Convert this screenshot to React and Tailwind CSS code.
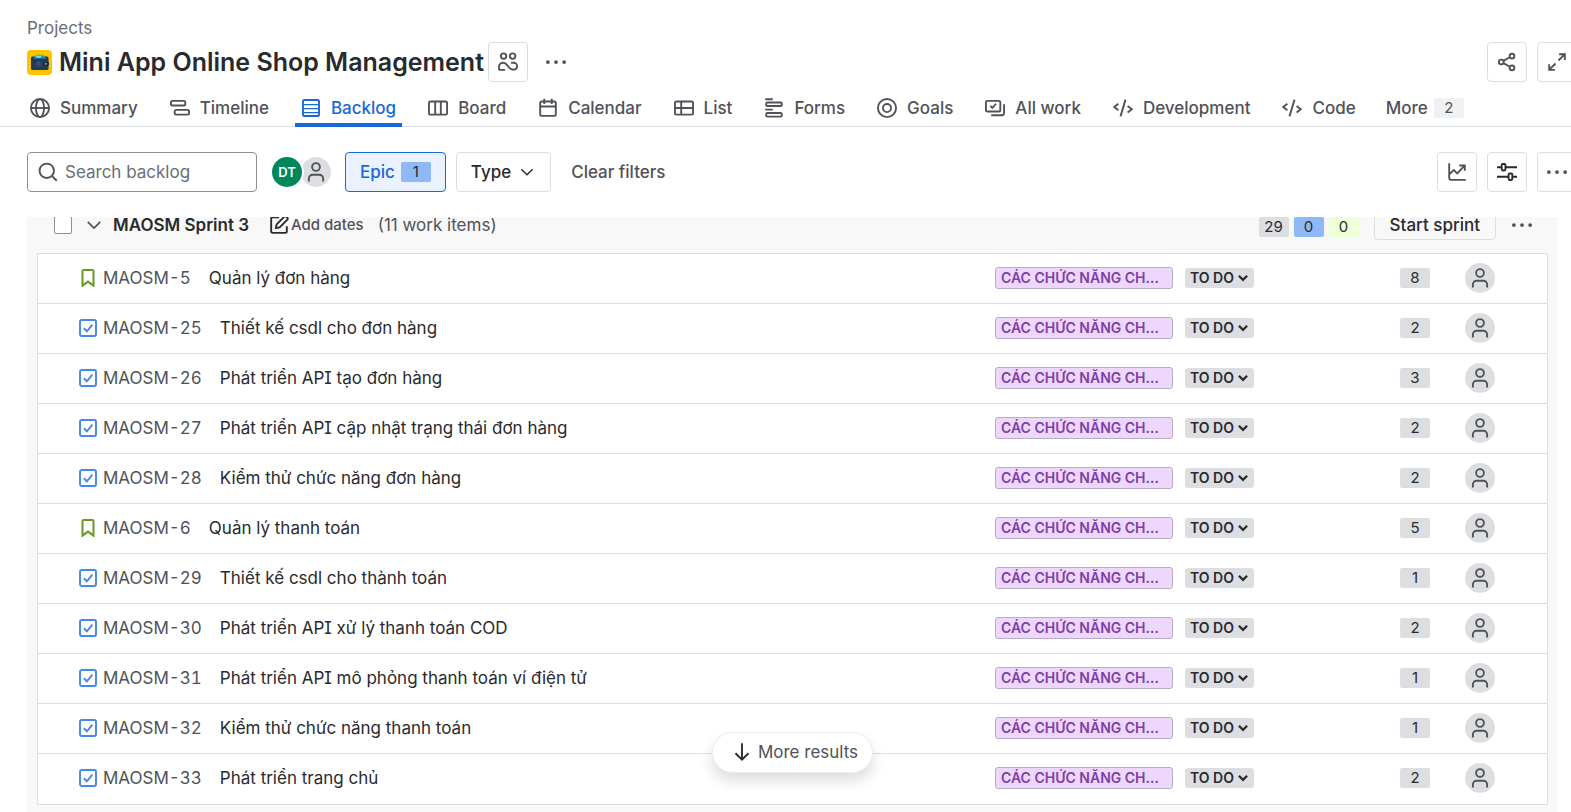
import React from "react";

function Icon({ size = 20, children, className = "", label }) {
  return (
    <svg
      width={size}
      height={size}
      viewBox="0 0 16 16"
      fill="none"
      stroke="currentColor"
      strokeWidth="1.5"
      className={"shrink-0 " + className}
      role={label ? "img" : undefined}
      aria-label={label}
      aria-hidden={label ? undefined : true}
    >
      {children}
    </svg>
  );
}

const icons = {
  globe: (
    <>
      <circle cx="8" cy="8" r="7.25" />
      <ellipse cx="8" cy="8" rx="3.25" ry="7.25" />
      <path d="M.75 8h14.5" />
    </>
  ),
  timeline: (
    <>
      <rect x=".75" y="2.25" width="11.5" height="3.75" rx="1.25" />
      <rect x="3.75" y="9.5" width="11.5" height="3.75" rx="1.25" />
    </>
  ),
  backlog: (
    <>
      <rect x="1.6" y="1.6" width="12.8" height="12.8" rx="1.25" />
      <path d="M1.6 5.2h12.8M1.6 8.4h12.8M1.6 11.6h12.8" strokeWidth="1" />
    </>
  ),
  board: (
    <>
      <rect x=".75" y="2.75" width="14.5" height="10.5" rx="1.25" />
      <path d="M5.75 2.75v10.5M10.25 2.75v10.5" />
    </>
  ),
  calendar: (
    <>
      <rect x="1.75" y="2.75" width="12.5" height="11.5" rx="1.25" />
      <path d="M1.75 6.75h12.5M5 .5v4.2M11 .5v4.2" />
    </>
  ),
  list: (
    <>
      <rect x=".75" y="2.75" width="14.5" height="10.5" rx="1.25" />
      <path d="M.75 8h14.5M5.75 2.75v10.5" />
    </>
  ),
  forms: (
    <>
      <rect x="1.75" y="3.6" width="12.5" height="2.8" rx=".9" />
      <rect x="1.75" y="12" width="12.5" height="2.9" rx=".9" />
      <path d="M1 .95h6M1 9.25h6" />
    </>
  ),
  goals: (
    <>
      <circle cx="8" cy="8" r="7.25" />
      <circle cx="8" cy="8" r="3.25" />
    </>
  ),
  allwork: (
    <>
      <rect x=".75" y="2.25" width="11.5" height="8.5" rx="1.25" />
      <path d="M4.3 6.3l1.6 1.6 2.9-3.3M15.25 5v7c0 1-.75 1.75-1.75 1.75H5" />
    </>
  ),
  code: <path d="M4.3 4.6L1 7.2l3.3 2.6M11.7 6.4L15 9l-3.3 2.6M10 1.3L6 14.7" />,
  people: (
    <>
      <circle cx="4.5" cy="3.25" r="2.2" />
      <circle cx="11.7" cy="3.25" r="2.2" />
      <path d="M5.7 14.3H1.6c-.5 0-.8-.4-.8-.8v-1.7C.8 9.900 2.300 8.600 4 8.600c2.400 0 3.100 1.600 4.100 2.900 1 1.400 1.900 2.700 4.300 2.700 1.700 0 2.850-1.300 2.850-2.950 0-1.600-1.350-2.650-2.850-2.650H10.400" />
    </>
  ),
  share: (
    <>
      <circle cx="3.4" cy="8" r="1.9" />
      <circle cx="12" cy="3.3" r="1.9" />
      <circle cx="12" cy="12.7" r="1.9" />
      <path d="M5.1 7.1l5.2-2.9M5.1 8.9l5.2 2.9" />
    </>
  ),
  expand: <path d="M9.7 1.75h4.55V6.3M14.1 1.9L9.2 6.8M6.3 14.25H1.75V9.7M1.9 14.1l4.9-4.9" />,
  chart: <path d="M1.75 1v11.5c0 1 .75 1.75 1.75 1.75H15M2 9.6l3.5-3.1 2.7 2.6 5.7-6M9.8 2.75h4.45V7" />,
  sliders: (
    <>
      <rect x="3.75" y="1.55" width="3" height="5.2" rx=".9" />
      <rect x="9.25" y="9.15" width="3" height="5.2" rx=".9" />
      <path d="M0 4.15h3.75M6.75 4.15H16M0 11.75h9.25M12.25 11.75H16" />
    </>
  ),
  dots: (
    <g fill="currentColor" stroke="none">
      <circle cx="1.5" cy="8" r="1.5" />
      <circle cx="8" cy="8" r="1.5" />
      <circle cx="14.5" cy="8" r="1.5" />
    </g>
  ),
  search: (
    <>
      <circle cx="7" cy="7" r="5.75" />
      <path d="M11.1 11.1l3.9 3.9" />
    </>
  ),
  chevron: <path d="M3 5.5l5 5 5-5" strokeWidth="1.3" />,
  chevronBold: <path d="M3.3 5.5L8 10.2l4.700-4.700" strokeWidth="2.6" />,
  person: (
    <>
      <circle cx="8" cy="4" r="3.1" />
      <path d="M2.3 15.500v-2.300c0-1.700 1.300-3 3-3h5.400c1.700 0 3 1.300 3 3v2.300" />
    </>
  ),
  edit: (
    <>
      <path d="M8 1.750H3c-.7 0-1.250.55-1.250 1.250v10c0 .7.550 1.250 1.250 1.250h10c.7 0 1.250-.55 1.250-1.250V9" />
      <path d="M5.500 10.500l.6-3L12.300 1.300c.4-.4 1-.4 1.400 0l1 1c.4.4.4 1 0 1.400L8.500 9.900z" />
    </>
  ),
  story: (
    <path
      d="M3.1 1.900c0-.6.400-1 1-1h7.800c.6 0 1 .4 1 1v12.900L8 11.200l-4.900 3.600z"
      strokeWidth="1.8"
    />
  ),
  task: (
    <>
      <rect x=".9" y=".9" width="14.200" height="14.200" rx="1.500" strokeWidth="1.7" />
      <path d="M4.300 8.200l2.700 2.700 4.900-5.900" strokeWidth="1.7" />
    </>
  ),
  arrowDown: <path d="M8 1v13M2.800 9L8 14.200 13.200 9" />,
};

function ProjectLogo() {
  return (
    <svg width="25" height="25" viewBox="0 0 25 25" className="shrink-0" aria-hidden="true">
      <rect width="25" height="25" rx="4" fill="#ffc400" />
      <rect x="4" y="6.500" width="17.500" height="13.500" rx="1.500" fill="#253858" />
      <path d="M6.500 8.500l2-3.300 2 .6 2-1.600 2.200 1.400 2-.4 2.300 3.300z" fill="#00a3bf" />
      <path d="M8.500 6.500l1.500-1 1.200 1 1.800-1.500 1.500 1.500-1 1.200H10z" fill="#79e2f2" />
      <circle cx="11.700" cy="14" r="2.800" fill="#344d78" />
      <rect x="17" y="11.500" width="5" height="4.500" rx="1.500" fill="#172b4d" />
      <circle cx="18.800" cy="13.800" r=".9" fill="#ffc400" />
    </svg>
  );
}

const tabs = [
  ["Summary", "globe"],
  ["Timeline", "timeline"],
  ["Backlog", "backlog"],
  ["Board", "board"],
  ["Calendar", "calendar"],
  ["List", "list"],
  ["Forms", "forms"],
  ["Goals", "goals"],
  ["All work", "allwork"],
  ["Development", "code"],
  ["Code", "code"],
];

const items = [
  ["MAOSM-5", "Quản lý đơn hàng", 8, "story"],
  ["MAOSM-25", "Thiết kế csdl cho đơn hàng", 2, "task"],
  ["MAOSM-26", "Phát triển API tạo đơn hàng", 3, "task"],
  ["MAOSM-27", "Phát triển API cập nhật trạng thái đơn hàng", 2, "task"],
  ["MAOSM-28", "Kiểm thử chức năng đơn hàng", 2, "task"],
  ["MAOSM-6", "Quản lý thanh toán", 5, "story"],
  ["MAOSM-29", "Thiết kế csdl cho thành toán", 1, "task"],
  ["MAOSM-30", "Phát triển API xử lý thanh toán COD", 2, "task"],
  ["MAOSM-31", "Phát triển API mô phỏng thanh toán ví điện tử", 1, "task"],
  ["MAOSM-32", "Kiểm thử chức năng thanh toán", 1, "task"],
  ["MAOSM-33", "Phát triển trang chủ", 2, "task"],
];

function IconButton({ icon, label, className = "" }) {
  return (
    <button
      type="button"
      aria-label={label}
      className={
        "flex size-10 shrink-0 items-center justify-center rounded border border-[#dddee1] bg-white " + className
      }
    >
      <Icon>{icons[icon]}</Icon>
    </button>
  );
}

function Badge({ children, className = "bg-[#dddee1] text-[#292a2e]" }) {
  return (
    <span className={"flex h-5 w-[30px] shrink-0 items-center justify-center rounded-xs text-[15px] leading-5 " + className}>
      {children}
    </span>
  );
}

function UnassignedAvatar() {
  return (
    <button
      type="button"
      aria-label="Unassigned"
      className="flex size-[30px] shrink-0 items-center justify-center rounded-full bg-[#dddee1] text-[#505258]"
    >
      <Icon>{icons.person}</Icon>
    </button>
  );
}

function Header() {
  return (
    <header className="pt-[18px]">
      <div className="px-[27px]">
        <a href="#projects" className="block w-fit leading-5 text-[#6b6e76]">
          Projects
        </a>
      </div>
      <div className="mt-1 flex items-center pl-[27px]">
        <ProjectLogo />
        <h1 className="ml-[7px] text-[25px] leading-8 font-semibold whitespace-nowrap text-[#292a2e]">
          Mini App Online Shop Management
        </h1>
        <IconButton icon="people" label="Team" className="ml-1" />
        <button type="button" aria-label="More actions" className="ml-2 flex size-10 items-center justify-center">
          <Icon>{icons.dots}</Icon>
        </button>
        <div className="-mr-1.5 ml-auto flex gap-2.5">
          <IconButton icon="share" label="Share" />
          <IconButton icon="expand" label="Full screen" />
        </div>
      </div>
      <nav className="mt-1.5 border-b border-[#dddee1] pl-6">
        <ul className="-mb-px flex h-[39px] gap-5 whitespace-nowrap">
          {tabs.map(([name, icon]) => (
            <li key={name} className="flex">
              <a
                href={"#" + name.toLowerCase().replace(" ", "-")}
                aria-current={name === "Backlog" ? "page" : undefined}
                className={
                  "flex items-center gap-2.5 border-b-4 px-1.5 pt-1 font-medium " +
                  (name === "Backlog" ? "border-[#1868db] text-[#1868db]" : "border-transparent")
                }
              >
                <Icon>{icons[icon]}</Icon>
                {name}
              </a>
            </li>
          ))}
          <li className="flex">
            <button type="button" className="flex items-center gap-1.5 border-b-4 border-transparent px-1 pt-1 font-medium">
              More
              <Badge className="bg-[#f0f1f2] font-normal">2</Badge>
            </button>
          </li>
        </ul>
      </nav>
    </header>
  );
}

function Filters() {
  return (
    <div className="flex items-center pt-[25px] pb-[25px] pl-[27px]">
      <label className="flex h-10 w-[230px] items-center gap-[7px] rounded border border-[#8c8f97] px-2.5">
        <Icon>{icons.search}</Icon>
        <input
          type="text"
          aria-label="Search backlog"
          placeholder="Search backlog"
          className="w-full min-w-0 bg-transparent outline-none placeholder:text-[#6b6e76]"
        />
      </label>
      <div className="ml-[15px] flex">
        <button
          type="button"
          aria-label="DT"
          className="z-10 flex size-[30px] items-center justify-center rounded-full bg-[#00875a] text-[13px] font-semibold text-white ring-2 ring-white"
        >
          DT
        </button>
        <div className="-ml-px flex">
          <UnassignedAvatar />
        </div>
      </div>
      <button
        type="button"
        className="ml-3.5 flex h-10 items-center gap-1.5 rounded border border-[#1868db] bg-[#e9f2fe] px-3.5 font-medium text-[#1868db]"
      >
        Epic
        <Badge className="rounded-sm bg-[#8fb8f6] font-normal text-[#292a2e]">1</Badge>
      </button>
      <button
        type="button"
        className="ml-2.5 flex h-10 items-center gap-[7px] rounded border border-[#dddee1] px-3.5 font-medium text-[#292a2e]"
      >
        Type
        <Icon size={18}>{icons.chevron}</Icon>
      </button>
      <button type="button" className="ml-5 font-medium">
        Clear filters
      </button>
      <div className="-mr-1.5 ml-auto flex gap-2.5">
        <IconButton icon="chart" label="Insights" />
        <IconButton icon="sliders" label="View settings" className="text-[#292a2e]" />
        <IconButton icon="dots" label="More" />
      </div>
    </div>
  );
}

function SprintHeader() {
  return (
    <div className="mb-2 flex h-10 items-center pr-[15px] pl-[17px] leading-4 whitespace-nowrap">
      <input
        type="checkbox"
        aria-label="Select all work items in MAOSM Sprint 3"
        className="size-[18px] shrink-0 appearance-none rounded-xs border border-[#8c8f97] bg-white"
      />
      <button type="button" aria-label="Collapse sprint" className="ml-3 shrink-0">
        <Icon>{icons.chevron}</Icon>
      </button>
      <h2 className="ml-[9px] font-semibold text-[#292a2e]">MAOSM Sprint 3</h2>
      <button type="button" className="ml-5 flex h-4 items-center gap-0.5 text-[15px] leading-4 font-medium">
        <Icon className="text-[#292a2e]">{icons.edit}</Icon>
        Add dates
      </button>
      <span className="ml-3.5">(11 work items)</span>
      <div className="ml-auto flex gap-[5px] pt-[3px]">
        <Badge>29</Badge>
        <Badge className="bg-[#8fb8f6] text-[#292a2e]">0</Badge>
        <Badge className="bg-[#efffd6] text-[#292a2e]">0</Badge>
      </div>
      <button
        type="button"
        className="ml-[15px] flex h-[30px] items-center rounded border border-[#dddee1] px-[15px] leading-4 font-medium text-[#292a2e]"
      >
        Start sprint
      </button>
      <button type="button" aria-label="Sprint actions" className="ml-[15px] flex size-[22px] items-center justify-center">
        <Icon>{icons.dots}</Icon>
      </button>
    </div>
  );
}

function Row({ id, title, points, type }) {
  return (
    <li className="flex h-[50px] items-center border-b border-[#dddee1] pr-[52px] pb-0.5 pl-10 whitespace-nowrap last:border-b-0">
      <span className={"flex w-[25px] shrink-0 pl-px " + (type === "story" ? "text-[#6a9a23]" : "text-[#4688ec]")}>
        <Icon size={18} label={type === "story" ? "Story" : "Task"}>
          {icons[type]}
        </Icon>
      </span>
      <a href={"#" + id} className="tabular-nums">
        {id}
      </a>
      <span className="ml-[18px] min-w-0 flex-1 truncate text-[#292a2e] [font-feature-settings:'cv08']">{title}</span>
      <span className="h-[22px] w-[178px] shrink-0 truncate rounded-[3px] border border-[#b8acc8] bg-[#eed7fc] pr-2.5 pl-[5px] text-sm leading-5 font-semibold text-[#803fa5]">
        CÁC CHỨC NĂNG CHÍNH
      </span>
      <button
        type="button"
        className="ml-3 flex h-5 w-[69px] shrink-0 items-center justify-between rounded-[3px] bg-[#dddee1] pr-1 pl-[5px] text-sm leading-5 font-semibold text-[#292a2e]"
      >
        TO DO
        <Icon size={14}>{icons.chevronBold}</Icon>
      </button>
      <div className="ml-[146px] flex items-center gap-[35px]">
        <Badge>{points}</Badge>
        <UnassignedAvatar />
      </div>
    </li>
  );
}

export default function App() {
  return (
    <div className="flex min-h-screen flex-col overflow-hidden bg-white font-['Inter',sans-serif] text-[17px] leading-6 text-[#505258]">
      <Header />
      <Filters />
      <main className="relative flex flex-1 flex-col overflow-hidden pr-[13px] pl-[27px]">
        <section className="-mt-3 flex-1 bg-[#f8f8f8] px-2.5 pb-2">
          <SprintHeader />
          <ul className="border border-[#dddee1] bg-white">
            {items.map(([id, title, points, type]) => (
              <Row key={id} id={id} title={title} points={points} type={type} />
            ))}
          </ul>
        </section>
        <div className="pointer-events-none absolute inset-x-0 bottom-10 flex justify-center pr-[13px] pl-[27px]">
          <button
            type="button"
            className="pointer-events-auto flex h-[41px] items-center gap-1.5 rounded-full border border-[#ebecee] bg-white pr-3.5 pb-0.5 pl-[19px] shadow-[0_8px_14px_rgba(30,31,33,0.15)]"
          >
            <Icon className="text-[#292a2e]">{icons.arrowDown}</Icon>
            More results
          </button>
        </div>
      </main>
    </div>
  );
}
